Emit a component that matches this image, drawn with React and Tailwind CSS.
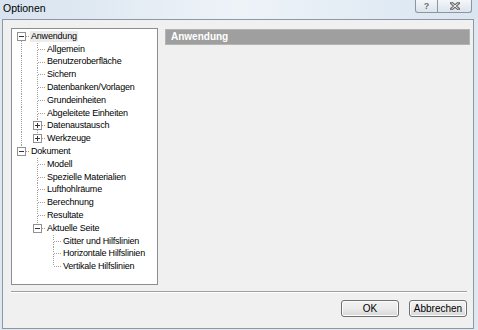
import React from "react";

/* ── tree data ── */
const tree = [
  {
    label: "Anwendung",
    selected: true,
    open: true,
    children: [
      { label: "Allgemein" },
      { label: "Benutzeroberfläche" },
      { label: "Sichern" },
      { label: "Datenbanken/Vorlagen" },
      { label: "Grundeinheiten" },
      { label: "Abgeleitete Einheiten" },
      { label: "Datenaustausch", closed: true },
      { label: "Werkzeuge", closed: true },
    ],
  },
  {
    label: "Dokument",
    open: true,
    children: [
      { label: "Modell" },
      { label: "Spezielle Materialien" },
      { label: "Lufthohlräume" },
      { label: "Berechnung" },
      { label: "Resultate" },
      {
        label: "Aktuelle Seite",
        open: true,
        children: [
          { label: "Gitter und Hilfslinien" },
          { label: "Horizontale Hilfslinien" },
          { label: "Vertikale Hilfslinien" },
        ],
      },
    ],
  },
];

function flatten(nodes, level = 0, anc = [], out = []) {
  nodes.forEach((n, i) => {
    const last = i === nodes.length - 1;
    const first = level === 0 && i === 0;
    out.push({ ...n, level, anc, last, first });
    if (n.open && n.children) flatten(n.children, level + 1, [...anc, !last], out);
  });
  return out;
}

const rows = flatten(tree);

/* ── one 16px connector cell ── */
function Cell({ full, own, last, first, box }) {
  return (
    <svg width="16" height="13" className="shrink-0 overflow-visible" shapeRendering="crispEdges">
      {full && <line x1="8.5" y1="0" x2="8.5" y2="13" stroke="#a0a0a0" strokeDasharray="1 1" />}
      {own && !first && <line x1="8.5" y1="0" x2="8.5" y2="6" stroke="#a0a0a0" strokeDasharray="1 1" />}
      {own && !last && <line x1="8.5" y1="7" x2="8.5" y2="13" stroke="#a0a0a0" strokeDasharray="1 1" />}
      {own && <line x1="9" y1="6.5" x2="16" y2="6.5" stroke="#a0a0a0" strokeDasharray="1 1" />}
      {box && (
        <g>
          <rect x="4.5" y="2.5" width="8" height="8" fill="#ffffff" stroke="#919191" />
          <line x1="6" y1="6.5" x2="11" y2="6.5" stroke="#333333" />
          {box === "+" && <line x1="8.5" y1="4" x2="8.5" y2="9" stroke="#333333" />}
        </g>
      )}
    </svg>
  );
}

function TreeRow({ r }) {
  const box = r.open ? "-" : r.closed ? "+" : null;
  return (
    <div className="flex items-center h-[12.8px]">
      {r.anc.map((a, k) => (
        <Cell key={k} full={a} />
      ))}
      <Cell own last={r.last} first={r.first} box={box} />
      <span
        className={`ml-[1px] px-[1px] text-[9px] leading-[11px] tracking-[-0.2px] text-black whitespace-nowrap ${
          r.selected ? "bg-[#ececec]" : ""
        }`}
      >
        {r.label}
      </span>
    </div>
  );
}

function Button({ children }) {
  return (
    <button className="w-[58px] h-[17px] rounded-[3px] border border-[#707070] bg-linear-to-b from-[#f2f2f2] via-[#ebebeb] to-[#d6d6d6] text-[10px] leading-none text-black shadow-[inset_0_0_0_1px_#fcfcfc]">
      {children}
    </button>
  );
}

export default function App() {
  return (
    <div className="w-[478px] h-[330px] flex flex-col bg-[#dfe8f1] overflow-hidden font-['Liberation_Sans',Arial,sans-serif]">
      {/* ── Title bar ── */}
      <div className="h-[19px] shrink-0 flex items-start justify-between bg-linear-to-r from-[#d7e3ef] via-[#eef3f8] to-[#d9e5f1]">
        <span className="pl-[3px] pt-[2px] text-[10.5px] leading-[13px] text-black">Optionen</span>
        <div className="mr-[6px] flex h-[13px] rounded-b-[3px] border border-t-0 border-[#8b96a3] bg-linear-to-b from-[#f4f7fa] to-[#dbe3ec] overflow-hidden">
          <div className="w-[22px] flex items-center justify-center border-r border-[#8b96a3]">
            <span className="text-[9px] font-bold leading-none text-[#707070]">?</span>
          </div>
          <div className="w-[33px] flex items-center justify-center">
            <svg width="10" height="8" viewBox="0 0 10 8">
              <path d="M1.5 1 L8.5 7 M8.5 1 L1.5 7" stroke="#6f6f6f" strokeWidth="3" strokeLinecap="square" />
              <path d="M1.5 1 L8.5 7 M8.5 1 L1.5 7" stroke="#f4f4f4" strokeWidth="1" />
            </svg>
          </div>
        </div>
      </div>

      {/* ── Client area ── */}
      <div className="ml-[2px] mr-[4px] mb-[1px] flex-1 border border-[#8e98a3] bg-[#f0f0f0] pl-[8px] pt-[8px]">
        <div className="flex gap-[7px]">
          {/* Tree */}
          <div className="w-[147px] h-[257px] shrink-0 border border-[#8a8d91] bg-white pl-[1px] pt-[1px] overflow-hidden">
            {rows.map((r) => (
              <TreeRow key={r.label} r={r} />
            ))}
          </div>

          {/* Page */}
          <div className="pt-[1px]">
            <div className="w-[305px] h-[16px] flex items-center border border-[#b4b4b4] bg-[#9f9f9f] pl-[5px]">
              <span className="text-[10px] font-bold leading-none text-white">Anwendung</span>
            </div>
          </div>
        </div>

        {/* Separator */}
        <div className="mt-[6px] w-[456px] border-t border-[#a0a0a0] border-b border-b-white" />

        {/* Buttons */}
        <div className="mt-[7px] w-[456px] flex justify-end gap-[10px]">
          <Button>OK</Button>
          <Button>Abbrechen</Button>
        </div>
      </div>
    </div>
  );
}
